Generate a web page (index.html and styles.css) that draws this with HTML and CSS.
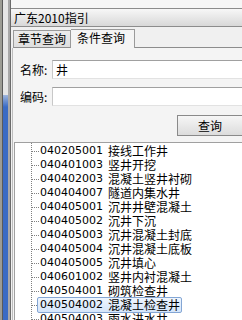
FILE: index.html
```html
<!doctype html>
<html lang="zh-CN">
  <head>
    <meta charset="utf-8" />
    <title>广东2010指引</title>
    <link rel="stylesheet" href="styles.css">
  </head>
  <body>
    <div class="frame">
      <div class="side"><div class="side-blue"></div></div>
      <div class="main">
        <div class="ruler"></div>
        <div class="title">广东2010指引</div>
        <div class="tabs">
          <div class="tab">章节查询</div>
          <div class="tab active">条件查询</div>
          <div class="tab-rest"></div>
        </div>
        <div class="panel">
          <div class="field">
            <span class="label">名称:</span>
            <div class="input">井</div>
          </div>
          <div class="field">
            <span class="label">编码:</span>
            <div class="input"></div>
          </div>
          <div class="actions">
            <div class="button">查询</div>
          </div>
          <div class="tree">
            <div class="row"><span class="code">040205001</span><span class="name">接线工作井</span></div>
            <div class="row"><span class="code">040401003</span><span class="name">竖井开挖</span></div>
            <div class="row"><span class="code">040402003</span><span class="name">混凝土竖井衬砌</span></div>
            <div class="row"><span class="code">040404007</span><span class="name">隧道内集水井</span></div>
            <div class="row"><span class="code">040405001</span><span class="name">沉井井壁混凝土</span></div>
            <div class="row"><span class="code">040405002</span><span class="name">沉井下沉</span></div>
            <div class="row"><span class="code">040405003</span><span class="name">沉井混凝土封底</span></div>
            <div class="row"><span class="code">040405004</span><span class="name">沉井混凝土底板</span></div>
            <div class="row"><span class="code">040405005</span><span class="name">沉井填心</span></div>
            <div class="row"><span class="code">040601002</span><span class="name">竖井内衬混凝土</span></div>
            <div class="row"><span class="code">040504001</span><span class="name">砌筑检查井</span></div>
            <div class="row selected"><span class="sel"><span class="code">040504002</span><span class="name">混凝土检查井</span></span></div>
            <div class="row"><span class="code">040504003</span><span class="name">雨水进水井</span></div>
          </div>
        </div>
      </div>
    </div>
  </body>
</html>
```

FILE: styles.css
```css
html,
body {
  margin: 0;
  padding: 0;
  width: 242px;
  height: 320px;
  overflow: hidden;
  background: #f0f0f0;
  font-family: "Noto Sans CJK SC", "DejaVu Sans", sans-serif;
  font-size: 12px;
  color: #000;
}
.frame {
  display: flex;
  height: 320px;
}
.side {
  width: 10px;
  flex: none;
  display: flex;
  flex-direction: column;
  justify-content: flex-end;
  border-right: 1px solid #6a6a6a;
  background: linear-gradient(to right, #9c9c94 0 2px, #5a5a5a 2px 3px, #e6e6e6 3px 8px, #a8a8a8 8px);
}
.side-blue {
  height: 225px;
  margin-left: 3px;
  width: 5px;
  background: linear-gradient(to bottom, #9fb6dc 0, #3a6bc4 12px, #3a6bc4 100%);
}
.main {
  flex: 1;
  min-width: 0;
  display: flex;
  flex-direction: column;
}
.ruler {
  height: 8px;
  flex: none;
  background: #f6f6f6;
}
.title {
  height: 17px;
  flex: none;
  line-height: 17px;
  padding-left: 3px;
  border-top: 1px solid #8c8c8c;
  border-bottom: 1px solid #8c8c8c;
  background: linear-gradient(to bottom, #f7f7f7, #d8d8d8);
}
.tabs {
  display: flex;
  align-items: flex-end;
  height: 21px;
  flex: none;
  padding-left: 2px;
}
.tab {
  height: 16px;
  line-height: 16px;
  padding: 0 4px;
  border: 1px solid #9a9a9a;
  border-bottom: 1px solid #8c8c8c;
  background: linear-gradient(to bottom, #ececec, #dedede);
}
.tab.active {
  height: 18px;
  line-height: 16px;
  padding: 0 9px 0 6px;
  border-left: none;
  border-bottom: none;
  background: #f4f4f4;
}
.tab-rest {
  flex: 1;
  border-bottom: 1px solid #8c8c8c;
}
.panel {
  flex: 1;
  margin-left: 1px;
  border-left: 1px solid #bdbdbd;
  background: #f4f4f4;
  padding-top: 12px;
  display: flex;
  flex-direction: column;
}
.field {
  display: flex;
  align-items: center;
  height: 19px;
  margin-bottom: 8px;
}
.label {
  width: 32px;
  padding-left: 7px;
  flex: none;
}
.input {
  flex: 1;
  height: 17px;
  line-height: 17px;
  padding-left: 3px;
  border-top: 1px solid #a0a0a0;
  border-left: 1px solid #c8c8c8;
  border-bottom: 1px solid #e2e2e2;
  background: #fff;
}
.actions {
  display: flex;
  justify-content: flex-end;
  margin-top: 1px;
}
.button {
  width: 64px;
  height: 19px;
  line-height: 19px;
  text-align: center;
  border: 1px solid #8a8a8a;
  border-right: none;
  background: linear-gradient(to bottom, #f6f6f6, #dcdcdc);
}
.tree {
  flex: 1;
  margin: 6px 0 0 1px;
  border-top: 1px solid #a0a0a0;
  border-left: 1px solid #a0a0a0;
  padding-top: 1px;
  background-image: repeating-linear-gradient(to bottom, #808080 0 1px, transparent 1px 2px);
  background-size: 1px 100%;
  background-position: 16px 0;
  background-repeat: no-repeat;
  background-color: #fff;
}
.row {
  height: 14px;
  line-height: 14px;
  display: flex;
  white-space: nowrap;
  padding-left: 17px;
}
.row::before {
  content: "";
  width: 7px;
  height: 1px;
  margin-top: 7px;
  flex: none;
  background-image: repeating-linear-gradient(to right, #808080 0 1px, transparent 1px 2px);
}
.code {
  font-family: "DejaVu Sans", sans-serif;
  font-size: 11px;
  width: 68px;
  padding-left: 1px;
  flex: none;
}
.sel {
  display: flex;
  margin-left: -2px;
  padding: 0 1px 0 1px;
  border: 1px solid #84a6d4;
  border-radius: 2px;
  height: 14px;
  line-height: 14px;
  margin-top: -1px;
  background: linear-gradient(to bottom, #eef5fe, #d4e5fa);
}
```
